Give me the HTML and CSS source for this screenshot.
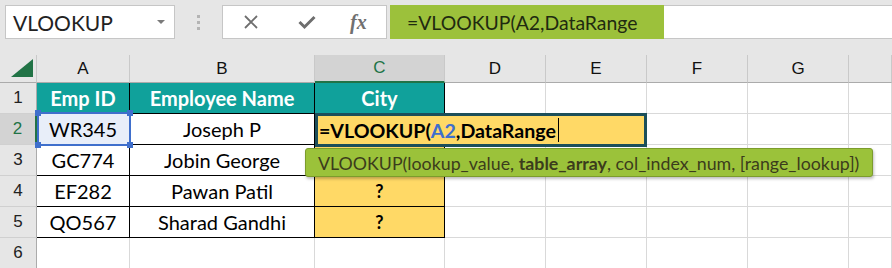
FILE: index.html
```html
<!DOCTYPE html>
<html lang="en">
<head>
    <meta charset="UTF-8">
    <title>VLOOKUP</title>
    <link rel="stylesheet" href="styles.css">
</head>
<body>

    <!-- Name box + formula bar -->
    <div class="toolbar">
        <div class="namebox">
            <span>VLOOKUP</span>
            <span class="arrow"></span>
        </div>
        <div class="dots"><i></i><i></i><i></i></div>
        <div class="fxbox">
            <svg class="icon" width="16" height="16" viewBox="0 0 16 16">
                <path d="M2 2 L14 14 M14 2 L2 14" stroke="#6e6e6e" stroke-width="1.8" fill="none"/>
            </svg>
            <svg class="icon" width="18" height="16" viewBox="0 0 18 16">
                <path d="M1.5 8 L6.5 13 L16.5 3" stroke="#6e6e6e" stroke-width="3" fill="none"/>
            </svg>
            <span class="fx">fx</span>
        </div>
        <div class="formula">=VLOOKUP(A2,DataRange</div>
        <div class="formula-rest"></div>
    </div>

    <!-- Sheet -->
    <div class="sheet">
        <div class="grid">
            <div class="corner">
                <svg width="24" height="20" viewBox="0 0 24 20"><polygon points="1,19 23,19 23,1" fill="#217346"/></svg>
            </div>
            <div class="colhead">A</div>
            <div class="colhead">B</div>
            <div class="colhead active">C</div>
            <div class="colhead">D</div>
            <div class="colhead">E</div>
            <div class="colhead">F</div>
            <div class="colhead">G</div>
            <div class="colhead"></div>

            <div class="rowhead">1</div>
            <div class="cell th">Emp ID</div>
            <div class="cell th">Employee Name</div>
            <div class="cell th last">City</div>
            <div class="cell"></div><div class="cell"></div><div class="cell"></div><div class="cell"></div><div class="cell"></div>

            <div class="rowhead active">2</div>
            <div class="cell td picked">WR345</div>
            <div class="cell td">Joseph P</div>
            <div class="cell td last yellow"></div>
            <div class="cell"></div><div class="cell"></div><div class="cell"></div><div class="cell"></div><div class="cell"></div>

            <!-- C3 sits under the tooltip -->
            <div class="rowhead">3</div>
            <div class="cell td">GC774</div>
            <div class="cell td">Jobin George</div>
            <div class="cell td last yellow"></div>
            <div class="cell"></div><div class="cell"></div><div class="cell"></div><div class="cell"></div><div class="cell"></div>

            <div class="rowhead">4</div>
            <div class="cell td">EF282</div>
            <div class="cell td">Pawan Patil</div>
            <div class="cell td last yellow q">?</div>
            <div class="cell"></div><div class="cell"></div><div class="cell"></div><div class="cell"></div><div class="cell"></div>

            <div class="rowhead">5</div>
            <div class="cell td">QO567</div>
            <div class="cell td">Sharad Gandhi</div>
            <div class="cell td last yellow q">?</div>
            <div class="cell"></div><div class="cell"></div><div class="cell"></div><div class="cell"></div><div class="cell"></div>

            <div class="rowhead">6</div>
            <div class="cell"></div><div class="cell"></div><div class="cell"></div><div class="cell"></div>
            <div class="cell"></div><div class="cell"></div><div class="cell"></div><div class="cell"></div>
        </div>

        <!-- range highlight on A2 -->
        <div class="refbox">
            <i class="h tl"></i><i class="h tr"></i><i class="h bl"></i><i class="h br"></i>
        </div>

        <!-- cell being edited -->
        <div class="editcell"><span>=VLOOKUP(<span class="ref">A2</span>,DataRange</span><span class="caret"></span></div>

        <!-- function tooltip -->
        <div class="tip"><span>VLOOKUP(lookup_value, <b>table_array</b>, col_index_num, [range_lookup])</span></div>
    </div>

</body>
</html>
```

FILE: styles.css
```css
body {
    margin: 0;
    width: 892px;
    height: 268px;
    overflow: hidden;
    background-color: #e6e6e6;
    font-family: 'Lato', 'Liberation Sans', sans-serif;
    color: #000;
}

/* ---------- formula bar ---------- */

.toolbar {
    display: flex;
    align-items: stretch;
    height: 34px;
    padding: 5px 0 16px 5px;
}

.namebox {
    width: 170px;
    box-sizing: border-box;
    background-color: #fff;
    border: 1px solid #c6c6c6;
    display: flex;
    align-items: center;
    justify-content: space-between;
    padding: 0 9px 0 7px;
    font-size: 21px;
    color: #222;
}

.arrow {
    width: 0;
    height: 0;
    border-left: 4px solid transparent;
    border-right: 4px solid transparent;
    border-top: 4px solid #7a7a7a;
}

.dots {
    width: 47px;
    display: flex;
    flex-direction: column;
    align-items: center;
    justify-content: center;
    gap: 3px;
}

.dots i {
    width: 3px;
    height: 3px;
    background-color: #b4b4b4;
}

.fxbox {
    width: 165px;
    box-sizing: border-box;
    background-color: #fff;
    border: 1px solid #c6c6c6;
    display: flex;
    align-items: center;
    padding-left: 20px;
}

.fxbox .icon:first-child {
    margin-right: 39px;
}

.fxbox .icon + .icon {
    margin-right: 34px;
}

.fx {
    font-family: 'Liberation Serif', serif;
    font-style: italic;
    font-weight: bold;
    font-size: 20px;
    color: #707070;
}

.formula {
    margin-left: 3px;
    width: 274px;
    box-sizing: border-box;
    background-color: #9cc13b;
    display: flex;
    align-items: center;
    padding-left: 17px;
    font-size: 19.4px;
    color: #1f2a10;
}

.formula-rest {
    flex: 1;
    background-color: #fff;
    border-top: 1px solid #c6c6c6;
    border-bottom: 1px solid #c6c6c6;
}

/* ---------- sheet ---------- */

.sheet {
    position: relative;
}

.grid {
    display: grid;
    grid-template-columns: 37px 93px 185px 130px 101px 101px 101px 101px 1fr;
    grid-template-rows: 28px repeat(6, 31px);
    background-color: #fff;
}

.corner {
    background-color: #e6e6e6;
    border-right: 1px solid #c9c9c9;
    border-bottom: 1px solid #ababab;
    display: flex;
    align-items: flex-end;
    justify-content: flex-end;
    padding: 0 2px 4px 0;
}

.colhead {
    background-color: #e6e6e6;
    border-right: 1px solid #c9c9c9;
    border-bottom: 1px solid #ababab;
    display: flex;
    align-items: center;
    justify-content: center;
    font-family: 'Liberation Sans', sans-serif;
    font-size: 17px;
    color: #111;
}

.colhead.active {
    background-color: #d3d3d3;
    border-bottom: 2px solid #217346;
    color: #217346;
}

.rowhead {
    background-color: #e6e6e6;
    border-right: 1px solid #ababab;
    border-bottom: 1px solid #d0d0d0;
    display: flex;
    align-items: center;
    justify-content: center;
    font-family: 'Liberation Sans', sans-serif;
    font-size: 17px;
    color: #222;
}

.rowhead.active {
    background-color: #d3d3d3;
    border-right: 2px solid #217346;
    color: #217346;
}

.cell {
    border-right: 1px solid #d9d9d9;
    border-bottom: 1px solid #d9d9d9;
    display: flex;
    align-items: center;
    justify-content: center;
    font-size: 20px;
}

.th {
    background-color: #10a19b;
    color: #fff;
    font-weight: bold;
    border-right-color: #000;
    border-bottom-color: #000;
}

.td {
    border-right-color: #000;
    border-bottom-color: #000;
}

.picked {
    background-color: #e8eef9;
}

.yellow {
    background-color: #ffd966;
}

.q {
    font-weight: bold;
    font-size: 18px;
}

/* ---------- overlays ---------- */

.refbox {
    position: absolute;
    left: 37px;
    top: 57px;
    width: 94px;
    height: 34px;
    box-sizing: border-box;
    border: 2px solid #3f6fcc;
}

.h {
    position: absolute;
    width: 6px;
    height: 6px;
    background-color: #3f6fcc;
}

.tl { left: -4px; top: -4px; }
.tr { right: -4px; top: -4px; }
.bl { left: -4px; bottom: -4px; }
.br { right: -4px; bottom: -4px; }

.editcell {
    position: absolute;
    left: 315px;
    top: 58px;
    width: 332px;
    height: 34px;
    box-sizing: border-box;
    border: 3px solid #1c4f5a;
    background-color: #ffd966;
    display: flex;
    align-items: center;
    padding-left: 1px;
    font-size: 19.6px;
    font-weight: bold;
}

.ref {
    color: #3f6fcc;
}

.caret {
    display: inline-block;
    width: 1px;
    height: 24px;
    margin-left: 2px;
    background-color: #000;
}

.tip {
    position: absolute;
    left: 305px;
    top: 93px;
    width: 568px;
    height: 29px;
    box-sizing: border-box;
    background-color: #9bc23a;
    border: 1px solid #7c9c2c;
    border-radius: 3px;
    box-shadow: 1px 2px 3px rgba(0, 0, 0, 0.25);
    display: flex;
    align-items: center;
    padding-left: 12px;
    font-size: 17.8px;
    color: #3b3c1c;
}
```
